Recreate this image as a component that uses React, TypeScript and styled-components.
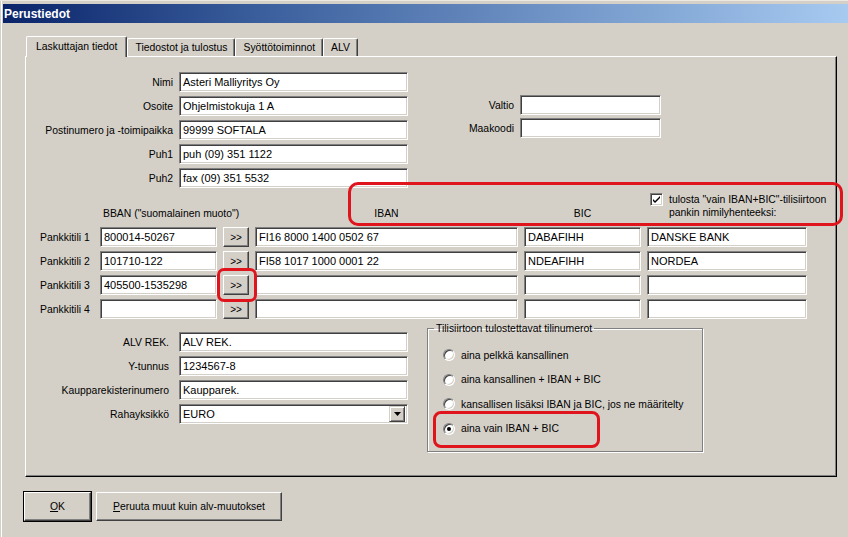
import React from "react";
import styled, { createGlobalStyle, css } from "styled-components";

const GlobalStyle = createGlobalStyle`
  html, body { margin: 0; padding: 0; background: #d4d0c8; }
  body { font-family: "Liberation Sans", Arial, sans-serif; font-size: 10.4px; color: #000; }
  * { box-sizing: border-box; }
`;

const Window = styled.div`
  width: 848px;
  height: 537px;
  background: #d4d0c8;
  overflow: hidden;
  padding-top: 3px;
  border-top: 1px solid #ece9e2;
  box-shadow: inset 1px 0 0 #d4d0c8, inset 2px 0 0 #ffffff;
`;

const TitleBar = styled.div`
  margin-left: 3px;
  height: 19px;
  display: flex;
  align-items: center;
  padding-left: 1px;
  background: linear-gradient(to right, #0a246a 0%, #3a5e9c 30%, #a6caf0 100%);
`;

const TitleText = styled.span`
  color: #fff;
  font-weight: bold;
  font-size: 12px;
`;

const Body = styled.div`
  padding: 13px 0 0 24px;
`;

const TabStrip = styled.div`
  display: flex;
  align-items: flex-end;
  height: 20px;
  padding-left: 2px;
  position: relative;
  z-index: 1;
`;

const Tab = styled.div<{ $active?: boolean }>`
  background: #d4d0c8;
  border-top: 1px solid #fff;
  border-left: 1px solid #fff;
  border-right: 1px solid #404040;
  box-shadow: inset -1px 0 0 #808080;
  border-radius: 2px 2px 0 0;
  display: flex;
  align-items: center;
  white-space: nowrap;
  height: 18px;
  padding: 0 7px 0 7px;
  ${(p) =>
    p.$active &&
    css`
      height: 21px;
      margin-bottom: -1px;
      padding: 0 9px 2px 9px;
      margin-right: 0;
    `}
`;

const Panel = styled.div`
  position: relative;
  margin-left: 1px;
  width: 812px;
  height: 421px;
  border-top: 1px solid #fff;
  border-left: 1px solid #fff;
  border-right: 1px solid #000;
  border-bottom: 1px solid #000;
  box-shadow: inset -1px -1px 0 #808080;
  padding-top: 15px;
`;

const TopSection = styled.div`
  display: flex;
  align-items: flex-start;
`;

const FieldGrid = styled.div<{ $label: number; $input: number; $gap: number }>`
  display: grid;
  grid-template-columns: ${(p) => p.$label}px ${(p) => p.$input}px;
  column-gap: ${(p) => p.$gap}px;
  row-gap: 4px;
  grid-auto-rows: 20px;
  align-items: center;
`;

const RightGrid = styled(FieldGrid)`
  margin-left: 40px;
  padding-top: 23px;
  row-gap: 3px;
`;

const Label = styled.div<{ $align?: "left" | "right" }>`
  text-align: ${(p) => p.$align ?? "right"};
  white-space: nowrap;
`;

const TextBox = styled.div`
  height: 20px;
  background: #fff;
  border-top: 1px solid #808080;
  border-left: 1px solid #808080;
  border-bottom: 1px solid #fff;
  border-right: 1px solid #fff;
  box-shadow: inset 1px 1px 0 #404040, inset -1px -1px 0 #d4d0c8;
  padding: 0 3px;
  display: flex;
  align-items: center;
  white-space: nowrap;
  overflow: hidden;
  font-size: 11px;
`;

const SelectBox = styled(TextBox)`
  justify-content: space-between;
  padding-right: 2px;
`;

const DropButton = styled.div`
  width: 16px;
  height: 16px;
  background: #d4d0c8;
  border-top: 1px solid #d4d0c8;
  border-left: 1px solid #d4d0c8;
  border-right: 1px solid #404040;
  border-bottom: 1px solid #404040;
  box-shadow: inset 1px 1px 0 #fff, inset -1px -1px 0 #808080;
  display: flex;
  align-items: center;
  justify-content: center;
`;

const BankGrid = styled.div`
  display: grid;
  padding-left: 14px;
  grid-template-columns: 54px 117px 26px 263px 117px 160px;
  grid-template-rows: 35px repeat(4, 20px);
  column-gap: 6px;
  row-gap: 4px;
  align-items: center;
`;

const ColHeader = styled.div<{ $center?: boolean }>`
  align-self: end;
  padding-bottom: 4px;
  white-space: nowrap;
  text-align: ${(p) => (p.$center ? "center" : "left")};
  padding-left: ${(p) => (p.$center ? 0 : 3)}px;
`;

const BbanHeader = styled(ColHeader)`
  grid-column: 2 / 4;
`;

const CheckCell = styled.div`
  align-self: end;
  padding: 0 0 4px 3px;
  display: flex;
  align-items: flex-start;
  gap: 6px;
  white-space: nowrap;
  line-height: 13px;
`;

const CheckBox = styled.div`
  width: 13px;
  height: 13px;
  flex: none;
  background: #fff;
  border-top: 1px solid #808080;
  border-left: 1px solid #808080;
  border-bottom: 1px solid #fff;
  border-right: 1px solid #fff;
  box-shadow: inset 1px 1px 0 #404040, inset -1px -1px 0 #d4d0c8;
  display: flex;
  align-items: center;
  justify-content: center;
`;

const SmallButton = styled.div`
  height: 20px;
  background: #d4d0c8;
  border-top: 1px solid #fff;
  border-left: 1px solid #fff;
  border-right: 1px solid #404040;
  border-bottom: 1px solid #404040;
  box-shadow: inset -1px -1px 0 #808080;
  display: flex;
  align-items: center;
  justify-content: center;
  font-size: 10px;
`;

const LowerSection = styled.div`
  display: flex;
  align-items: flex-start;
  margin-top: 13px;
`;

const GroupBox = styled.fieldset`
  margin: -10px 0 0 19px;
  padding: 0;
  width: 276px;
  height: 130px;
  border: 1px solid #808080;
  box-shadow: inset 1px 1px 0 #fff, 1px 1px 0 #fff;
`;

const Legend = styled.legend`
  margin-left: 6px;
  padding: 0 2px;
  line-height: 13px;
`;

const RadioList = styled.div`
  display: flex;
  flex-direction: column;
  padding: 8px 0 0 15px;
`;

const RadioRow = styled.div`
  display: flex;
  align-items: center;
  gap: 6px;
  height: 24.5px;
  white-space: nowrap;
`;

const RadioCircle = styled.span<{ $on?: boolean }>`
  position: relative;
  width: 12px;
  height: 12px;
  flex: none;
  border-radius: 50%;
  background: #fff;
  border: 1px solid;
  border-color: #808080 #fff #fff #808080;
  box-shadow: inset 1px 1px 0 #404040, inset -1px -1px 0 #d4d0c8;
  ${(p) =>
    p.$on &&
    css`
      &::after {
        content: "";
        position: absolute;
        left: 3px;
        top: 3px;
        width: 4px;
        height: 4px;
        border-radius: 50%;
        background: #000;
      }
    `}
`;

const ButtonRow = styled.div`
  display: flex;
  gap: 5px;
  margin-top: 15px;
`;

const PushButton = styled.div<{ $default?: boolean; $w: number }>`
  width: ${(p) => p.$w}px;
  height: 29px;
  background: #d4d0c8;
  border-top: 1px solid #fff;
  border-left: 1px solid #fff;
  border-right: 1px solid #404040;
  border-bottom: 1px solid #404040;
  box-shadow: inset -1px -1px 0 #808080;
  display: flex;
  align-items: center;
  justify-content: center;
  white-space: nowrap;
  ${(p) =>
    p.$default &&
    css`
      box-shadow: inset -1px -1px 0 #808080, 0 0 0 1px #000;
    `}
`;

const Underline = styled.span`
  text-decoration: underline;
  text-underline-offset: 1px;
`;

const Annotation = styled.div`
  position: absolute;
  border: 3px solid #e0141c;
  pointer-events: none;
`;

const topFields: [string, string][] = [
  ["Nimi", "Asteri Malliyritys Oy"],
  ["Osoite", "Ohjelmistokuja 1 A"],
  ["Postinumero ja -toimipaikka", "99999 SOFTALA"],
  ["Puh1", "puh (09) 351 1122"],
  ["Puh2", "fax (09) 351 5532"],
];

const banks: [string, string, string, string, string][] = [
  ["Pankkitili 1", "800014-50267", "FI16 8000 1400 0502 67", "DABAFIHH", "DANSKE BANK"],
  ["Pankkitili 2", "101710-122", "FI58 1017 1000 0001 22", "NDEAFIHH", "NORDEA"],
  ["Pankkitili 3", "405500-1535298", "", "", ""],
  ["Pankkitili 4", "", "", "", ""],
];

const lowerFields: [string, string][] = [
  ["ALV REK.", "ALV REK."],
  ["Y-tunnus", "1234567-8"],
  ["Kaupparekisterinumero", "Kaupparek."],
];

const radios = [
  "aina pelkkä kansallinen",
  "aina kansallinen + IBAN + BIC",
  "kansallisen lisäksi IBAN ja BIC, jos ne määritelty",
  "aina vain IBAN + BIC",
];

export default function App() {
  return (
    <>
      <GlobalStyle />
      <Window>
        <TitleBar>
          <TitleText>Perustiedot</TitleText>
        </TitleBar>
        <Body>
          <TabStrip>
            <Tab $active>Laskuttajan tiedot</Tab>
            <Tab>Tiedostot ja tulostus</Tab>
            <Tab>Syöttötoiminnot</Tab>
            <Tab>ALV</Tab>
          </TabStrip>
          <Panel>
            <TopSection>
              <FieldGrid $label={147} $input={229} $gap={6}>
                {topFields.map(([l, v]) => (
                  <React.Fragment key={l}>
                    <Label>{l}</Label>
                    <TextBox>{v}</TextBox>
                  </React.Fragment>
                ))}
              </FieldGrid>
              <RightGrid $label={66} $input={141} $gap={6}>
                <Label>Valtio</Label>
                <TextBox />
                <Label>Maakoodi</Label>
                <TextBox />
              </RightGrid>
            </TopSection>

            <BankGrid>
              <span />
              <BbanHeader>BBAN ("suomalainen muoto")</BbanHeader>
              <ColHeader $center>IBAN</ColHeader>
              <ColHeader $center>BIC</ColHeader>
              <CheckCell>
                <CheckBox>
                  <svg width="9" height="9" viewBox="0 0 9 9">
                    <path d="M1 4 L3 6 L8 1 L8 3 L3 8 L1 6 Z" fill="#000" />
                  </svg>
                </CheckBox>
                <span>
                  tulosta "vain IBAN+BIC"-tilisiirtoon
                  <br />
                  pankin nimilyhenteeksi:
                </span>
              </CheckCell>
              {banks.map(([l, bban, iban, bic, name]) => (
                <React.Fragment key={l}>
                  <Label $align="left">{l}</Label>
                  <TextBox>{bban}</TextBox>
                  <SmallButton>&gt;&gt;</SmallButton>
                  <TextBox>{iban}</TextBox>
                  <TextBox>{bic}</TextBox>
                  <TextBox>{name}</TextBox>
                </React.Fragment>
              ))}
            </BankGrid>

            <LowerSection>
              <FieldGrid $label={143} $input={229} $gap={10}>
                {lowerFields.map(([l, v]) => (
                  <React.Fragment key={l}>
                    <Label>{l}</Label>
                    <TextBox>{v}</TextBox>
                  </React.Fragment>
                ))}
                <Label>Rahayksikkö</Label>
                <SelectBox>
                  <span>EURO</span>
                  <DropButton>
                    <svg width="7" height="4" viewBox="0 0 7 4">
                      <path d="M0 0 H7 L3.5 4 Z" fill="#000" />
                    </svg>
                  </DropButton>
                </SelectBox>
              </FieldGrid>
              <GroupBox>
                <Legend>Tilisiirtoon tulostettavat tilinumerot</Legend>
                <RadioList>
                  {radios.map((r, i) => (
                    <RadioRow key={r}>
                      <RadioCircle $on={i === 3} />
                      <span>{r}</span>
                    </RadioRow>
                  ))}
                </RadioList>
              </GroupBox>
            </LowerSection>

            <Annotation style={{ left: 322, top: 125, width: 495, height: 44, borderRadius: 10 }} />
            <Annotation style={{ left: 191, top: 211, width: 40, height: 34, borderRadius: 7 }} />
            <Annotation style={{ left: 407, top: 354, width: 167, height: 37, borderRadius: 8 }} />
          </Panel>
          <ButtonRow>
            <PushButton $default $w={67}>
              <Underline>O</Underline>K
            </PushButton>
            <PushButton $w={186}>
              <span>
                <Underline>P</Underline>eruuta muut kuin alv-muutokset
              </span>
            </PushButton>
          </ButtonRow>
        </Body>
      </Window>
    </>
  );
}
